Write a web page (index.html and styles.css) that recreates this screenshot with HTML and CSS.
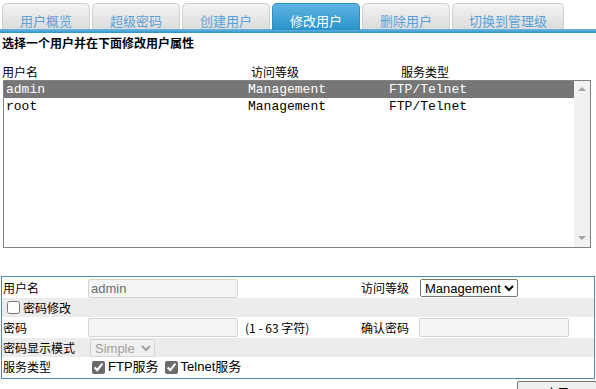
FILE: index.html
```html
<!DOCTYPE html>
<html lang="zh">
<head>
<meta charset="utf-8">
<link rel="stylesheet" href="styles.css">
</head>
<body>
<div class="tabs">
  <div class="tab">用户概览</div>
  <div class="tab">超级密码</div>
  <div class="tab">创建用户</div>
  <div class="tab active">修改用户</div>
  <div class="tab">删除用户</div>
  <div class="tab wide">切换到管理级</div>
</div>
<div class="tabbar"></div>
<div class="heading">选择一个用户并在下面修改用户属性</div>
<div class="cols">
  <span class="c1">用户名</span><span class="c2">访问等级</span><span class="c3">服务类型</span>
</div>
<div class="listbox">
  <div class="rows">
    <div class="row sel"><span class="r1">admin</span><span class="r2">Management</span><span class="r3">FTP/Telnet</span></div>
    <div class="row"><span class="r1">root</span><span class="r2">Management</span><span class="r3">FTP/Telnet</span></div>
  </div>
  <div class="scroll">
    <svg class="arr" width="8" height="5" viewBox="0 0 8 5"><path d="M0 5 L4 1 L8 5 Z" fill="#a3a3a3"/></svg>
    <svg class="arr" width="8" height="5" viewBox="0 0 8 5"><path d="M0 0 L4 4 L8 0 Z" fill="#a3a3a3"/></svg>
  </div>
</div>
<div class="form">
  <div class="frow">
    <span>用户名</span>
    <span><input class="txt" type="text" value="admin" disabled></span>
    <span></span>
    <span>访问等级</span>
    <span><select class="sel-level"><option>Management</option><option>Monitor</option></select></span>
  </div>
  <div class="frow gray">
    <label class="chk"><input type="checkbox" class="cb">密码修改</label>
  </div>
  <div class="frow">
    <span>密码</span>
    <span><input class="txt" type="password" disabled></span>
    <span class="hint">(1 - 63 字符)</span>
    <span>确认密码</span>
    <span><input class="txt txt2" type="password" disabled></span>
  </div>
  <div class="frow gray">
    <span>密码显示模式</span>
    <span><select class="sel-mode" disabled><option>Simple</option></select></span>
  </div>
  <div class="frow">
    <span>服务类型</span>
    <span class="svc"><label class="chk2"><input type="checkbox" checked>FTP服务</label><label class="chk2"><input type="checkbox" checked>Telnet服务</label></span>
  </div>
</div>
<div class="btnrow"><button class="btn">应用</button></div>
</body>
</html>
```
FILE: styles.css
```css
html, body {
  margin: 0;
  padding: 0;
  background: #fff;
}
body {
  font-family: "Noto Sans CJK SC", "Liberation Sans", sans-serif;
  font-size: 12px;
  color: #000;
  width: 596px;
  overflow: hidden;
}
.tabs {
  display: flex;
  gap: 2px;
  padding: 3px 0 0 2px;
  height: 26px;
}
.tab {
  width: 86px;
  height: 25px;
  border: 1px solid #cfcfcf;
  border-bottom: none;
  border-radius: 5px 5px 0 0;
  background: linear-gradient(#f3f3f3, #dcdcdc);
  color: #5aa0d8;
  font-size: 13px;
  text-align: center;
  line-height: 34px;
  overflow: hidden;
  box-sizing: content-box;
}
.tab.wide { width: 110px; }
.tab.active {
  background: linear-gradient(#5db4e0, #2b93cb);
  border-color: #2f8fc4;
  color: #fff;
  height: 26px;
}
.tabbar {
  height: 4px;
  background: linear-gradient(#6ab9e4, #2f91c9);
}
.heading {
  font-weight: bold;
  line-height: 16px;
  margin-top: 2px;
  padding-left: 2px;
}
.cols {
  position: relative;
  margin-top: 13px;
  height: 16px;
  line-height: 16px;
}
.cols span { position: absolute; top: 0; }
.c1 { left: 2px; }
.c2 { left: 251px; }
.c3 { left: 401px; }
.listbox {
  margin-left: 3px;
  width: 586px;
  height: 166px;
  border: 1px solid #828282;
  display: flex;
}
.rows {
  flex: 1;
}
.row {
  display: grid;
  grid-template-columns: 242px 141px 1fr;
  height: 17px;
  line-height: 17px;
  font-family: "Liberation Mono", monospace;
  font-size: 13px;
  padding-left: 2px;
  color: #000;
}
.row.sel {
  background: #767676;
  color: #fff;
}
.scroll {
  width: 16px;
  background: #f1f1f1;
  display: flex;
  flex-direction: column;
  justify-content: space-between;
  align-items: center;
  padding: 5px 0 6px;
  box-sizing: border-box;
}
.arr { display: block; }
.form {
  margin: 28px 0 0 1px;
  width: 592px;
  border: 1px solid #4d8db5;
  padding: 1px 0;
}
.frow {
  display: grid;
  grid-template-columns: 85px 155px 118px 58px 1fr;
  align-items: center;
  height: 20px;
  padding-left: 1px;
  line-height: 16px;
}
.frow.gray { background: #ececec; height: 19px; }
.frow:nth-child(3) { height: 21px; }
.txt {
  width: 150px;
  height: 19px;
  box-sizing: border-box;
  border: 1px solid #d3d3d3;
  border-radius: 2px;
  background: #f5f5f5;
  font-family: "Liberation Sans", sans-serif;
  font-size: 13px;
  color: #6d6d6d;
  padding: 0 2px;
  margin: 0;
  display: block;
}
.hint { padding-left: 2px; }
.sel-level {
  font-family: "Liberation Sans", sans-serif;
  font-size: 13px;
  height: 18px;
  padding: 0;
  margin: 0 0 0 1px;
  border: 1px solid #767676;
  border-radius: 2px;
  background: #fff;
  color: #000;
  display: block;
}
.sel-mode {
  font-family: "Liberation Sans", sans-serif;
  font-size: 13px;
  height: 18px;
  width: 65px;
  margin: 0 0 0 2px;
  padding: 0;
  display: block;
}
.chk {
  grid-column: 1 / 3;
  display: flex;
  align-items: center;
}
.cb { margin: 0 3px 0 4px; width: 13px; height: 13px; }
.svc {
  grid-column: 2 / 5;
  display: flex;
  align-items: center;
  font-family: "Liberation Sans", "Noto Sans CJK SC", sans-serif;
  font-size: 13px;
}
.chk2 { display: flex; align-items: center; margin-right: 2px; }
.chk2 input {
  margin: 0 3px 0 4px;
  width: 13px;
  height: 13px;
  accent-color: #6b6b6b;
}
.btnrow {
  display: flex;
  justify-content: flex-end;
  margin-top: 2px;
}
.btn {
  width: 80px;
  height: 22px;
  border: 1px solid #767676;
  border-radius: 2px;
  background: #efefef;
  font-family: "Noto Sans CJK SC", sans-serif;
  font-size: 12px;
  margin-right: -1px;
}
```
